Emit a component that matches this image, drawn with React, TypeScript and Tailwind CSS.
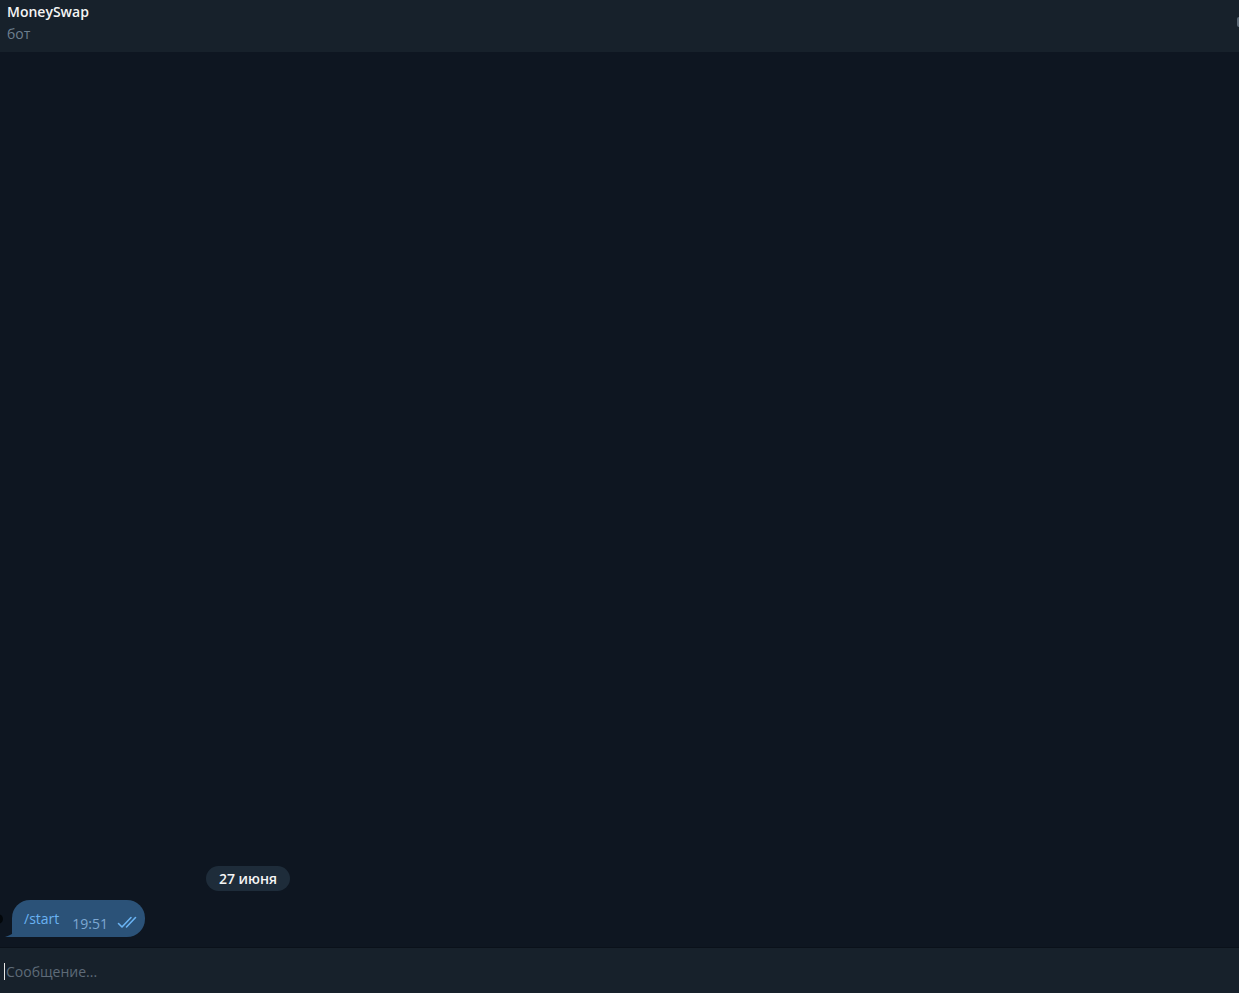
const font = { fontFamily: '"Open Sans", "Noto Sans", sans-serif' };

function Header() {
  return (
    <div className="relative h-[52px] shrink-0 bg-[#17212b] px-[7px] pt-[2px]">
      <div className="text-[14px] font-semibold leading-[19px] text-[#f5f5f5]">MoneySwap</div>
      <div className="mt-[3px] text-[14px] leading-[19px] text-[#6d7f8f]">бот</div>
      <div className="absolute right-0 top-[17px] h-[10px] w-[2px] rounded-l bg-[#5b6875]" />
    </div>
  );
}

function DoubleCheck() {
  return (
    <svg className="ml-[9px] mt-[15px]" width="20" height="14" viewBox="0 0 20 14" fill="none">
      <path
        d="M1.5 8.5 L5 12 L14 2.5 M9.5 12 L18.5 2.5"
        stroke="#6ab3f3"
        strokeWidth="1.6"
        strokeLinecap="round"
        strokeLinejoin="round"
      />
    </svg>
  );
}

function Bubble() {
  return (
    <div className="relative ml-[12px] flex h-[37px] w-[133px] items-start rounded-[18px] rounded-bl-[4px] bg-[#2b5278] pl-[12px]">
      <svg className="absolute bottom-0 left-[-7px]" width="12" height="14" viewBox="0 0 12 14">
        <path d="M12 0 C12 7 10 11 0 14 L12 14 Z" fill="#2b5278" />
      </svg>
      <span className="mt-[9px] text-[14px] leading-[19px] text-[#6ab3f3]">/start</span>
      <span className="ml-[13px] mt-[14px] text-[14px] leading-[19px] text-[#7da8d3]">19:51</span>
      <DoubleCheck />
    </div>
  );
}

export default function App() {
  return (
    <div className="flex h-[993px] w-full flex-col bg-[#0e1621]" style={font}>
      <Header />
      <div className="relative flex flex-1 flex-col justify-end pb-[10px]">
        <div className="flex w-[496px] justify-center">
          <div className="flex h-[25px] items-center rounded-full bg-[#1e2c3a] px-[13px] pb-[1px] text-[14px] font-semibold text-[#f5f5f5]">
            27 июня
          </div>
        </div>
        <div className="mt-[9px] flex items-center">
          <div className="absolute left-[-7px] h-[10px] w-[10px] rounded-full bg-[#03070b]" />
          <Bubble />
        </div>
      </div>
      <div className="h-px shrink-0 bg-[#0a111a]" />
      <div className="flex h-[45px] shrink-0 items-center bg-[#17212b] pl-[4px] pt-[1px]">
        <div className="h-[17px] w-px bg-[#e6e6e6]" />
        <span className="ml-[1px] text-[14px] text-[#5e6b78]">Сообщение...</span>
      </div>
    </div>
  );
}
